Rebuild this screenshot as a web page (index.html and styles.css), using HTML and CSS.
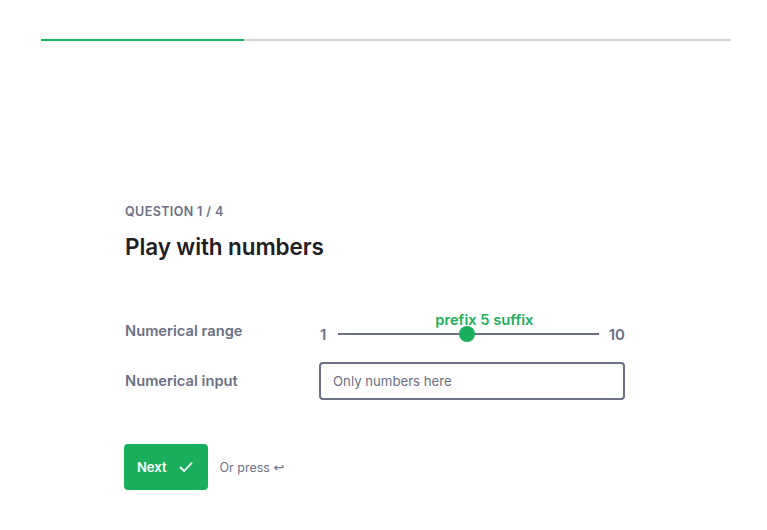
FILE: index.html
```html
<!DOCTYPE html>
<html>
<head>
<meta charset="utf-8">
<link rel="stylesheet" href="styles.css">
</head>
<body>
<div class="progress"><div class="progress-fill"></div></div>
<main class="form">
  <div class="counter">QUESTION 1 / 4</div>
  <h1 class="title">Play with numbers</h1>
  <div class="fields">
    <div class="row">
      <div class="label">Numerical range</div>
      <div class="control range">
        <span class="bound">1</span>
        <div class="track">
          <div class="thumb"><span class="value">prefix 5 suffix</span></div>
        </div>
        <span class="bound">10</span>
      </div>
    </div>
    <div class="row">
      <div class="label">Numerical input</div>
      <div class="control"><input class="input" type="text" placeholder="Only numbers here"></div>
    </div>
  </div>
  <div class="actions">
    <button class="next">Next
      <svg width="16" height="16" viewBox="0 0 16 16"><path d="M2.5 8.5 L6.2 12 L13.5 4.2" fill="none" stroke="#fff" stroke-width="1.8" stroke-linecap="round" stroke-linejoin="round"/></svg>
    </button>
    <span class="hint">Or press <span class="key">↩</span></span>
  </div>
</main>
</body>
</html>
```
FILE: styles.css
```css
* { box-sizing: border-box; }
body {
  margin: 0;
  background: #fff;
  font-family: Inter, "Noto Sans", sans-serif;
  color: #1f2023;
}
.progress {
  margin: 39px 36px 0 41px;
  height: 2px;
  background: #d4d4d8;
}
.progress-fill {
  width: 203px;
  height: 100%;
  background: #1aaf5d;
}
.form {
  padding: 163px 0 0 125px;
  width: 625px;
}
.counter {
  font-size: 12.5px;
  line-height: 16px;
  font-weight: 600;
  color: #6b7085;
  letter-spacing: 0.4px;
}
.title {
  margin: 13px 0 0;
  font-size: 22.5px;
  line-height: 28px;
  font-weight: 600;
  color: #1f2023;
  letter-spacing: -0.1px;
}
.fields {
  margin-top: 51px;
  display: flex;
  flex-direction: column;
  gap: 12px;
}
.row {
  display: flex;
  align-items: center;
}
.label {
  width: 194px;
  font-size: 14.7px;
  font-weight: 600;
  color: #6b7085;
}
.control { flex: 1; }
.range {
  display: flex;
  align-items: center;
  height: 38px;
  padding-top: 6px;
  margin-left: 1px;
}
.bound {
  font-size: 15px;
  font-weight: 600;
  color: #6b7085;
}
.track {
  flex: 1;
  margin: 0 10px 0 12px;
  height: 2px;
  background: #6b7085;
  position: relative;
}
.thumb {
  position: absolute;
  left: 121px;
  top: -7px;
  width: 16px;
  height: 16px;
  border-radius: 50%;
  background: #1aaf5d;
}
.value {
  position: absolute;
  bottom: 13px;
  left: 25px;
  transform: translateX(-50%);
  white-space: nowrap;
  font-size: 14.7px;
  font-weight: 600;
  color: #1aaf5d;
}
.input {
  width: 306px;
  height: 38px;
  border: 2px solid #6b7085;
  border-radius: 4px;
  padding: 0 12px;
  font-family: Inter, "Noto Sans", sans-serif;
  font-size: 13.2px;
  color: #1f2023;
  outline: none;
}
.input::placeholder { color: #6b7085; }
.actions {
  margin-top: 44px;
  display: flex;
  align-items: center;
  gap: 11px;
  margin-left: -1px;
}
.next {
  display: flex;
  align-items: center;
  gap: 12px;
  height: 46px;
  padding: 0 14px 0 13px;
  border: none;
  border-radius: 4px;
  background: #1aaf5d;
  color: #fff;
  font-family: Inter, "Noto Sans", sans-serif;
  font-size: 13px;
  font-weight: 600;
}
.hint {
  font-size: 12.5px;
  color: #6b7085;
}
.key {
  font-family: "DejaVu Sans", sans-serif;
  font-size: 13px;
}
```
